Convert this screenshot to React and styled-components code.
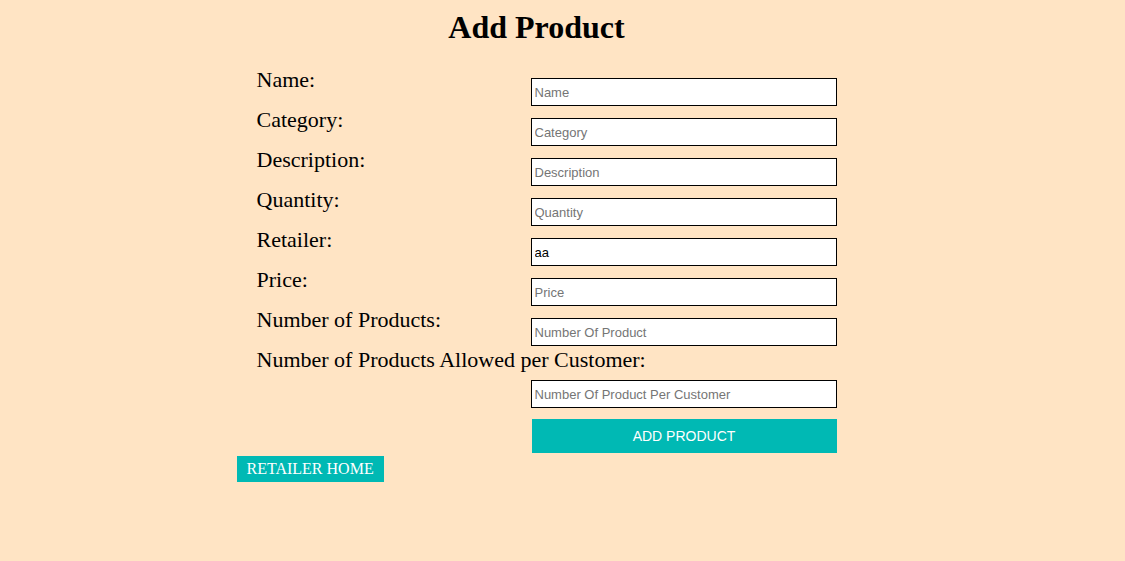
import React from "react";
import styled, { createGlobalStyle } from "styled-components";

const GlobalStyle = createGlobalStyle`
  html, body {
    margin: 0;
    padding: 0;
    background: #ffe4c4;
  }
  body {
    font-family: "Liberation Serif", Georgia, serif;
  }
`;

const fields = [
  { label: "Name:", placeholder: "Name" },
  { label: "Category:", placeholder: "Category" },
  { label: "Description:", placeholder: "Description" },
  { label: "Quantity:", placeholder: "Quantity" },
  { label: "Retailer:", placeholder: "Retailer", value: "aa" },
  { label: "Price:", placeholder: "Price" },
  { label: "Number of Products:", placeholder: "Number Of Product" },
  {
    label: "Number of Products Allowed per Customer:",
    placeholder: "Number Of Product Per Customer",
    stacked: true,
  },
];

// centred in the viewport minus a 52px gutter on the right
const Wrapper = styled.div`
  display: flex;
  justify-content: center;
  padding-right: 52px;
`;

const Page = styled.div`
  width: 600px;
  padding-top: 9px;
  padding-bottom: 60px;
`;

const Title = styled.h1`
  margin: 0;
  text-align: center;
  font-size: 32px;
  line-height: 36px;
  font-weight: bold;
  color: #000;
`;

const Form = styled.form`
  display: flex;
  flex-direction: column;
  margin-top: 23px;
`;

const Row = styled.div`
  display: flex;
  flex-direction: ${({ $stacked }) => ($stacked ? "column" : "row")};
  justify-content: space-between;
  align-items: ${({ $stacked }) => ($stacked ? "flex-end" : "flex-start")};
  height: ${({ $stacked }) => ($stacked ? "auto" : "40px")};
`;

const Label = styled.label`
  align-self: flex-start;
  padding-left: 20px;
  font-size: 22px;
  line-height: 24px;
  color: #000;
  white-space: nowrap;
`;

const Input = styled.input`
  box-sizing: border-box;
  width: 306px;
  height: 28px;
  margin-top: ${({ $stacked }) => ($stacked ? "8px" : "10px")};
  padding: 0 3px;
  border: 1px solid #000;
  background: #fff;
  font-family: "Liberation Sans", Arial, sans-serif;
  font-size: 13px;
  color: #000;
  outline: none;

  &::placeholder {
    color: #757575;
  }
`;

const SubmitButton = styled.button`
  align-self: flex-end;
  box-sizing: border-box;
  width: 305px;
  height: 34px;
  margin-top: 11px;
  border: none;
  background: #00b9b4;
  color: #fff;
  font-family: "Liberation Sans", Arial, sans-serif;
  font-size: 14px;
  cursor: pointer;
`;

const HomeButton = styled.button`
  display: block;
  margin-top: 3px;
  height: 26px;
  padding: 0 10px;
  border: none;
  background: #00b9b4;
  color: #fff;
  font-family: "Liberation Serif", Georgia, serif;
  font-size: 16px;
  text-transform: uppercase;
  cursor: pointer;
`;

export default function App() {
  return (
    <>
      <GlobalStyle />
      <Wrapper>
        <Page>
          <Title>Add Product</Title>
          <Form onSubmit={(e) => e.preventDefault()}>
            {fields.map((f) => (
              <Row key={f.placeholder} $stacked={f.stacked}>
                <Label>{f.label}</Label>
                <Input
                  $stacked={f.stacked}
                  placeholder={f.placeholder}
                  defaultValue={f.value}
                />
              </Row>
            ))}
            <SubmitButton type="submit">ADD PRODUCT</SubmitButton>
          </Form>
          <HomeButton>Retailer Home</HomeButton>
        </Page>
      </Wrapper>
    </>
  );
}
